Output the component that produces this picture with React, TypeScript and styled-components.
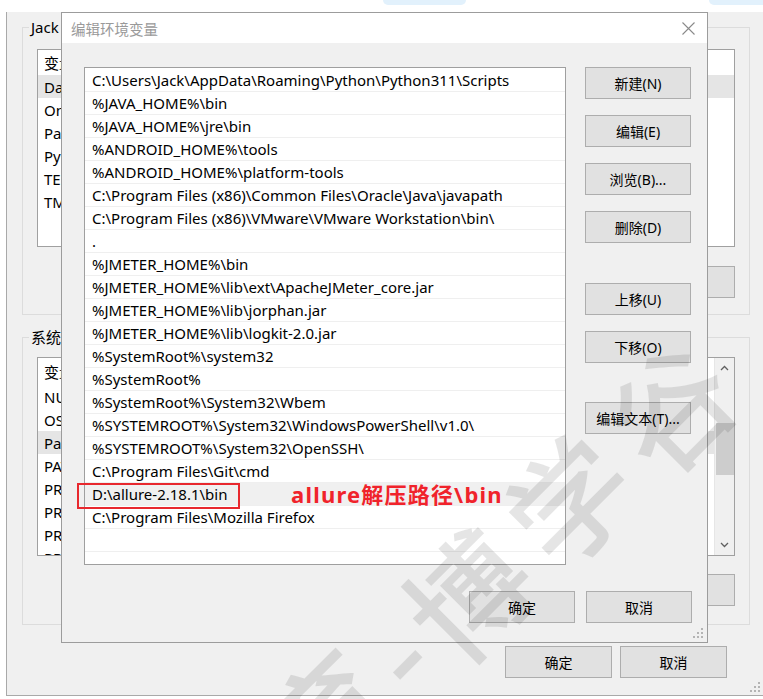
import React from 'react';
import styled, { createGlobalStyle } from 'styled-components';

const Global = createGlobalStyle`
  html, body { margin: 0; padding: 0; background: #ffffff; }
  body { font-family: "Noto Sans", "Noto Sans CJK SC", sans-serif; color: #000; }
  * { box-sizing: border-box; }
`;

const Desktop = styled.div`
  position: relative;
  width: 763px;
  height: 699px;
  overflow: hidden;
  background: #ffffff;
`;

const TabPill = styled.div<{ $left: number; $width: number }>`
  position: absolute;
  top: 0;
  left: ${(p) => p.$left}px;
  width: ${(p) => p.$width}px;
  height: 5px;
  background: #e2f1fc;
  border-radius: 0 0 6px 6px;
`;

/* ---------- background window ---------- */

const OuterWindow = styled.div`
  position: absolute;
  left: 6px;
  top: 12px;
  width: 757px;
  height: 684px;
  background: #f0f0f0;
  border-left: 1px solid #a9a9a9;
  border-bottom: 1px solid #a9a9a9;
  padding: 15px 13px 0 15px;
  display: flex;
  flex-direction: column;
`;

const GroupBox = styled.div<{ $pt: number; $pb: number; $mt?: number }>`
  position: relative;
  height: 288px;
  margin-top: ${(p) => p.$mt ?? 0}px;
  border: 1px solid #dcdcdc;
  padding: ${(p) => p.$pt}px 14px ${(p) => p.$pb}px 14px;
  display: flex;
  flex-direction: column;
`;

const Legend = styled.span`
  position: absolute;
  left: 6px;
  top: -11px;
  padding: 0 2px;
  background: #f0f0f0;
  font-size: 15px;
  line-height: 20px;
  white-space: nowrap;
`;

const VarList = styled.div<{ $h: number }>`
  height: ${(p) => p.$h}px;
  flex-shrink: 0;
  background: #ffffff;
  border: 1px solid #a0a0a0;
  display: flex;
  overflow: hidden;
`;

const VarRows = styled.div`
  flex: 1;
  display: flex;
  flex-direction: column;
  overflow: hidden;
`;

const VarHeader = styled.div<{ $h: number }>`
  height: ${(p) => p.$h}px;
  flex-shrink: 0;
  display: flex;
  align-items: center;
  font-size: 15px;
  white-space: nowrap;
`;

const VarRow = styled.div<{ $selected?: boolean }>`
  height: 23px;
  flex-shrink: 0;
  display: flex;
  align-items: center;
  font-size: 15px;
  white-space: nowrap;
  background: ${(p) => (p.$selected ? '#e5e5e5' : 'transparent')};
`;

const VarName = styled.span`
  width: 260px;
  padding-left: 6px;
  flex-shrink: 0;
`;

const VarValue = styled.span`
  padding-left: 6px;
`;

const ScrollBar = styled.div`
  width: 20px;
  flex-shrink: 0;
  background: #f0f0f0;
  border-left: 1px solid #e6e6e6;
  display: flex;
  flex-direction: column;
  align-items: center;
`;

const ScrollArrow = styled.div`
  height: 20px;
  width: 100%;
  display: flex;
  align-items: center;
  justify-content: center;
`;

const ScrollThumb = styled.div<{ $top: number; $h: number }>`
  margin-top: ${(p) => p.$top}px;
  height: ${(p) => p.$h}px;
  width: 18px;
  background: #cdcdcd;
`;

const ScrollFill = styled.div`
  flex: 1;
`;

const GroupButtons = styled.div<{ $mt: number }>`
  margin-top: ${(p) => p.$mt}px;
  display: flex;
  justify-content: flex-end;
  gap: 10px;
`;

const WinButton = styled.button<{ $w?: number; $mt?: number }>`
  width: ${(p) => p.$w ?? 106}px;
  height: 32px;
  margin: ${(p) => p.$mt ?? 0}px 0 0 0;
  padding: 0;
  flex-shrink: 0;
  background: #e1e1e1;
  border: 1px solid #adadad;
  border-radius: 0;
  font-family: "Noto Sans", "Noto Sans CJK SC", sans-serif;
  font-size: 14px;
  color: #000;
  display: flex;
  align-items: center;
  justify-content: center;
`;

const OuterFooter = styled.div`
  margin-top: 21px;
  margin-right: 23px;
  display: flex;
  justify-content: flex-end;
  gap: 8px;
`;

const Grip = styled.svg<{ $r: number; $b: number }>`
  position: absolute;
  right: ${(p) => p.$r}px;
  bottom: ${(p) => p.$b}px;
`;

/* ---------- dialog ---------- */

const Dialog = styled.div`
  position: absolute;
  left: 61px;
  top: 12px;
  width: 647px;
  border: 1px solid #9c9c9c;
  background: #f0f0f0;
  display: flex;
  flex-direction: column;
`;

const TitleBar = styled.div`
  height: 30px;
  background: #ffffff;
  display: flex;
  align-items: center;
  justify-content: space-between;
  padding: 0 12px 0 9px;
`;

const TitleText = styled.span`
  font-family: "Noto Sans CJK SC", sans-serif;
  font-size: 14.5px;
  color: #9a9a9a;
`;

const DialogBody = styled.div`
  position: relative;
  padding: 24px 15px 19px 22px;
  display: flex;
  flex-direction: column;
`;

const TopRow = styled.div`
  display: flex;
  align-items: flex-start;
`;

const PathList = styled.div`
  width: 482px;
  height: 498px;
  flex-shrink: 0;
  background: #ffffff;
  border: 1px solid #9f9f9f;
  padding-top: 1px;
  display: flex;
  flex-direction: column;
  overflow: hidden;
`;

const PathRow = styled.div<{ $selected?: boolean }>`
  height: 23px;
  flex-shrink: 0;
  padding-left: 7px;
  display: flex;
  align-items: center;
  font-size: 15px;
  white-space: nowrap;
  border-bottom: 1px solid #efefef;
  background: ${(p) => (p.$selected ? '#f0f0f0' : '#ffffff')};
`;

const ButtonColumn = styled.div`
  margin-left: 19px;
  width: 106px;
  display: flex;
  flex-direction: column;
`;

const BottomRow = styled.div`
  margin-top: 26px;
  display: flex;
  justify-content: flex-end;
  gap: 11px;
`;

const AnnotBox = styled.div`
  position: absolute;
  left: 15px;
  top: 440px;
  width: 163px;
  height: 26px;
  border: 2px solid #e8282e;
`;

const AnnotLabel = styled.span`
  position: absolute;
  left: 229px;
  top: 437px;
  line-height: 28px;
  font-family: "Noto Sans", "Noto Sans CJK SC", sans-serif;
  font-weight: 700;
  font-size: 22px;
  letter-spacing: 1.2px;
  color: #f0232b;
  white-space: nowrap;
`;

/* ---------- watermark ---------- */

const Watermark = styled.div`
  position: absolute;
  inset: 0;
  pointer-events: none;
  z-index: 5;
`;

const WmChar = styled.span<{ $x: number; $y: number }>`
  position: absolute;
  left: ${(p) => p.$x - 60}px;
  top: ${(p) => p.$y - 60}px;
  width: 120px;
  height: 120px;
  line-height: 120px;
  text-align: center;
  font-family: "Noto Sans CJK SC", sans-serif;
  font-size: 120px;
  font-weight: 500;
  color: rgba(0, 0, 0, 0.1);
  transform: rotate(-45deg);
`;

const userVars: [string, string][] = [
  ['DataGrip', 'D:\\DataGrip\\bin;'],
  ['OneDrive', 'C:\\Users\\Jack\\OneDrive'],
  ['Path', 'C:\\Users\\Jack\\AppData\\Roaming\\Python'],
  ['PyCharm Community Edition', 'D:\\PyCharm\\bin;'],
  ['TEMP', 'C:\\Users\\Jack\\AppData\\Local\\Temp'],
  ['TMP', 'C:\\Users\\Jack\\AppData\\Local\\Temp'],
];

const sysVars: [string, string][] = [
  ['NUMBER_OF_PROCESSORS', '8'],
  ['OS', 'Windows_NT'],
  ['Path', 'C:\\Program Files (x86)\\Common Files'],
  ['PATHEXT', '.COM;.EXE;.BAT;.CMD;.VBS'],
  ['PROCESSOR_ARCHITECTURE', 'AMD64'],
  ['PROCESSOR_IDENTIFIER', 'Intel64 Family 6'],
  ['PROCESSOR_LEVEL', '6'],
  ['PROCESSOR_REVISION', '8c01'],
];

const paths = [
  'C:\\Users\\Jack\\AppData\\Roaming\\Python\\Python311\\Scripts',
  '%JAVA_HOME%\\bin',
  '%JAVA_HOME%\\jre\\bin',
  '%ANDROID_HOME%\\tools',
  '%ANDROID_HOME%\\platform-tools',
  'C:\\Program Files (x86)\\Common Files\\Oracle\\Java\\javapath',
  'C:\\Program Files (x86)\\VMware\\VMware Workstation\\bin\\',
  '.',
  '%JMETER_HOME%\\bin',
  '%JMETER_HOME%\\lib\\ext\\ApacheJMeter_core.jar',
  '%JMETER_HOME%\\lib\\jorphan.jar',
  '%JMETER_HOME%\\lib\\logkit-2.0.jar',
  '%SystemRoot%\\system32',
  '%SystemRoot%',
  '%SystemRoot%\\System32\\Wbem',
  '%SYSTEMROOT%\\System32\\WindowsPowerShell\\v1.0\\',
  '%SYSTEMROOT%\\System32\\OpenSSH\\',
  'C:\\Program Files\\Git\\cmd',
  'D:\\allure-2.18.1\\bin',
  'C:\\Program Files\\Mozilla Firefox',
  '',
  '',
];

const GripIcon = ({ r, b }: { r: number; b: number }) => (
  <Grip $r={r} $b={b} width="11" height="11" viewBox="0 0 11 11">
    {[
      [8, 0],
      [8, 4],
      [4, 4],
      [8, 8],
      [4, 8],
      [0, 8],
    ].map(([x, y], i) => (
      <rect key={i} x={x} y={y} width="2" height="2" fill="#b4b4b4" />
    ))}
  </Grip>
);

const Chevron = ({ up }: { up?: boolean }) => (
  <svg width="9" height="6" viewBox="0 0 9 6">
    <polyline
      points={up ? '1,5 4.5,1.5 8,5' : '1,1 4.5,4.5 8,1'}
      fill="none"
      stroke="#606060"
      strokeWidth="1.3"
    />
  </svg>
);

export default function App() {
  return (
    <>
      <Global />
      <Desktop>
        <TabPill $left={383} $width={83} />
        <TabPill $left={709} $width={60} />

        <OuterWindow>
          <GroupBox $pt={21} $pb={17}>
            <Legend>Jack 的用户变量(U)</Legend>
            <VarList $h={198}>
              <VarRows>
                <VarHeader $h={25}>
                  <VarName>变量</VarName>
                  <VarValue>值</VarValue>
                </VarHeader>
                {userVars.map(([n, v], i) => (
                  <VarRow key={n} $selected={i === 0}>
                    <VarName>{n}</VarName>
                    <VarValue>{v}</VarValue>
                  </VarRow>
                ))}
              </VarRows>
            </VarList>
            <GroupButtons $mt={19}>
              <WinButton $w={107}>新建(N)...</WinButton>
              <WinButton $w={107}>编辑(E)...</WinButton>
              <WinButton $w={107}>删除(D)</WinButton>
            </GroupButtons>
          </GroupBox>

          <GroupBox $pt={19} $pb={18} $mt={22}>
            <Legend>系统变量(S)</Legend>
            <VarList $h={199}>
              <VarRows>
                <VarHeader $h={27}>
                  <VarName>变量</VarName>
                  <VarValue>值</VarValue>
                </VarHeader>
                {sysVars.map(([n, v], i) => (
                  <VarRow key={n + i} $selected={i === 2}>
                    <VarName>{n}</VarName>
                    <VarValue>{v}</VarValue>
                  </VarRow>
                ))}
              </VarRows>
              <ScrollBar>
                <ScrollArrow>
                  <Chevron up />
                </ScrollArrow>
                <ScrollThumb $top={45} $h={52} />
                <ScrollFill />
                <ScrollArrow>
                  <Chevron />
                </ScrollArrow>
              </ScrollBar>
            </VarList>
            <GroupButtons $mt={18}>
              <WinButton $w={107}>新建(W)...</WinButton>
              <WinButton $w={107}>编辑(I)...</WinButton>
              <WinButton $w={107}>删除(L)</WinButton>
            </GroupButtons>
          </GroupBox>

          <OuterFooter>
            <WinButton $w={107}>确定</WinButton>
            <WinButton $w={107}>取消</WinButton>
          </OuterFooter>
          <GripIcon r={2} b={2} />
        </OuterWindow>

        <Dialog>
          <TitleBar>
            <TitleText>编辑环境变量</TitleText>
            <svg width="13" height="13" viewBox="0 0 13 13">
              <path d="M0.5 0.5 L12.5 12.5 M12.5 0.5 L0.5 12.5" stroke="#8a8a8a" strokeWidth="1.1" />
            </svg>
          </TitleBar>
          <DialogBody>
            <TopRow>
              <PathList>
                {paths.map((p, i) => (
                  <PathRow key={i} $selected={i === 18}>
                    {p}
                  </PathRow>
                ))}
              </PathList>
              <ButtonColumn>
                <WinButton>新建(N)</WinButton>
                <WinButton $mt={16}>编辑(E)</WinButton>
                <WinButton $mt={16}>浏览(B)...</WinButton>
                <WinButton $mt={16}>删除(D)</WinButton>
                <WinButton $mt={40}>上移(U)</WinButton>
                <WinButton $mt={16}>下移(O)</WinButton>
                <WinButton $mt={39}>编辑文本(T)...</WinButton>
              </ButtonColumn>
            </TopRow>
            <BottomRow>
              <WinButton>确定</WinButton>
              <WinButton>取消</WinButton>
            </BottomRow>
            <AnnotBox />
            <AnnotLabel>allure解压路径\bin</AnnotLabel>
            <GripIcon r={3} b={3} />
          </DialogBody>
        </Dialog>

        <Watermark>
          <WmChar $x={668} $y={405}>谷</WmChar>
          <WmChar $x={566} $y={497}>学</WmChar>
          <WmChar $x={465} $y={592}>博</WmChar>
          <WmChar $x={395} $y={652}>-</WmChar>
          <WmChar $x={325} $y={712}>育</WmChar>
        </Watermark>
      </Desktop>
    </>
  );
}
